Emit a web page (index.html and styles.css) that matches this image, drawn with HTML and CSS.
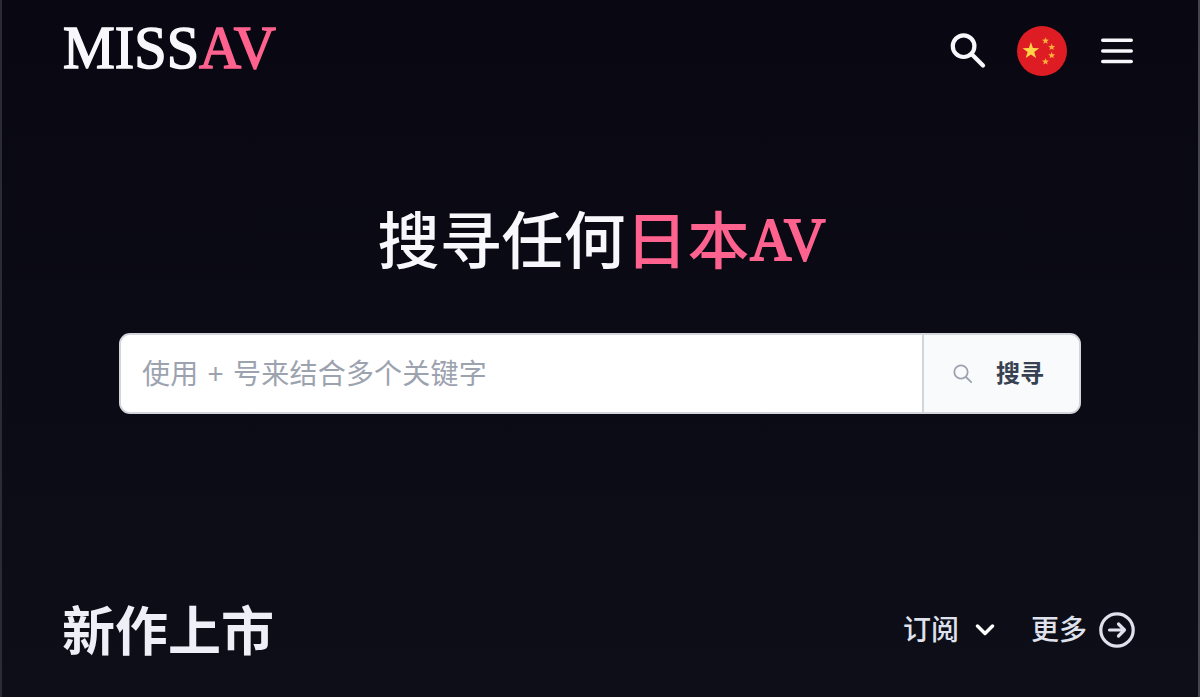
FILE: index.html
```
<!DOCTYPE html>
<html lang="zh-CN">
<head>
    <meta charset="UTF-8">
    <meta name="viewport" content="width=device-width, initial-scale=1.0">
    <title>MISSAV</title>
    <link rel="stylesheet" href="styles.css">
</head>
<body>
    <header class="header">
        <a class="logo"><span class="logo-text">MISS<span class="pink">AV</span></span></a>
        <nav class="nav">
            <svg class="icon-search" viewBox="0 0 36 36" fill="none" stroke="currentColor" stroke-width="4.2" stroke-linecap="round">
                <circle cx="13.6" cy="13.2" r="10.8"/>
                <path d="M22 21.5 33 32.5"/>
            </svg>
            <svg class="flag" viewBox="0 0 50 50">
                <circle cx="25" cy="25" r="25" fill="#de1c24"/>
                <g fill="#ffd447">
                    <path d="M13.9 16.1 15.9 22.1 22.2 22.2 17.2 26 19.1 32.1 13.9 28.5 8.7 32.1 10.6 26 5.5 22.2 11.9 22.1Z"/>
                    <g fill="#fbb03c">
                        <path id="star" d="M28.5 11.2 29.4 13.6 31.9 13.7 30 15.3 30.6 17.7 28.5 16.4 26.3 17.7 27 15.3 25 13.7 27.6 13.6Z"/>
                        <use href="#star" x="6.2" y="6.4"/>
                        <use href="#star" x="6.2" y="14.6"/>
                        <use href="#star" y="20.9"/>
                    </g>
                </g>
            </svg>
            <svg class="icon-menu" viewBox="0 0 32 26" fill="none" stroke="currentColor" stroke-width="3.6" stroke-linecap="round">
                <path d="M1.8 2.3H30.2M1.8 13H30.2M1.8 23.5H30.2"/>
            </svg>
        </nav>
    </header>

    <main>
        <section class="hero">
            <h1 class="title">搜寻任何<span class="pink">日本<span class="latin">AV</span></span></h1>
            <form class="search">
                <input class="search-input" type="text" placeholder="使用 + 号来结合多个关键字">
                <button class="search-button" type="button">
                    <svg class="icon-small" viewBox="0 0 20 20" fill="none" stroke="currentColor" stroke-width="1.8" stroke-linecap="round">
                        <circle cx="8" cy="8" r="6.7"/>
                        <path d="M13 13 18.2 18.2"/>
                    </svg>
                    <span class="search-label">搜寻</span>
                </button>
            </form>
        </section>

        <section class="section-head">
            <h2 class="section-title">新作上市</h2>
            <div class="links">
                <a class="link subscribe"><span class="link-text">订阅</span>
                    <svg class="icon-chevron" viewBox="0 0 20 12" fill="none" stroke="currentColor" stroke-width="3.4" stroke-linecap="round" stroke-linejoin="round">
                        <path d="M2.5 2 10 9.5 17.5 2"/>
                    </svg>
                </a>
                <a class="link more"><span class="link-text">更多</span>
                    <svg class="icon-arrow" viewBox="0 0 36 36" fill="none" stroke="currentColor" stroke-width="3.2" stroke-linecap="round" stroke-linejoin="round">
                        <circle cx="18" cy="18" r="16.2"/>
                        <path d="M10.5 18H25.5M19.5 12 25.5 18 19.5 24"/>
                    </svg>
                </a>
            </div>
        </section>
    </main>
</body>
</html>
```
FILE: styles.css
```
* {
    box-sizing: border-box;
}
body {
    margin: 0;
    height: 697px;
    overflow: hidden;
    border-left: 2px solid #2b2b35;
    border-right: 2px solid #45464d;
    background: linear-gradient(#090812, #0e0e18);
    color: #f8f8fc;
    font-family: "Noto Sans CJK SC", sans-serif;
}
.pink {
    color: #fe628e;
}
.header {
    display: flex;
    justify-content: space-between;
    align-items: center;
    height: 100px;
    padding: 0 65px 0 61px;
}
.logo {
    width: 214px;
    height: 100px;
}
.logo-text {
    display: inline-block;
    font-family: "Liberation Serif", serif;
    font-size: 62px;
    line-height: 94px;
    transform: scaleX(0.94);
    transform-origin: left;
    -webkit-text-stroke: 1.6px currentColor;
}
.nav {
    display: flex;
    align-items: center;
    padding-top: 1px;
}
.icon-search {
    width: 36px;
    height: 36px;
}
.flag {
    width: 50px;
    height: 50px;
    margin: 0 34px 0 31px;
}
.icon-menu {
    width: 32px;
    height: 26px;
}
.hero {
    height: 474px;
    padding: 91px 117px 0;
}
.title {
    margin: 0;
    height: 92px;
    padding-left: 3px;
    font-size: 62px;
    font-weight: 500;
    line-height: 92px;
    text-align: center;
    white-space: nowrap;
}
.latin {
    display: inline-block;
    width: 76px;
    font-family: "Liberation Serif", serif;
    font-size: 61px;
    line-height: 1;
    vertical-align: 4px;
    text-align: left;
    transform: scaleX(0.94);
    transform-origin: left;
    -webkit-text-stroke: 2px currentColor;
}
.search {
    display: flex;
    height: 81px;
    margin: 50px 0 0;
    border: 2px solid #d2d5dc;
    border-radius: 11px;
    background: #fff;
    overflow: hidden;
}
.search-input {
    flex: 1;
    min-width: 0;
    padding: 0 0 4px 21px;
    border: none;
    outline: none;
    background: #fff;
    font-family: inherit;
    font-size: 28px;
    letter-spacing: 0.2px;
    word-spacing: 3px;
}
.search-input::placeholder {
    color: #9ca3af;
    opacity: 1;
}
.search-button {
    display: flex;
    align-items: center;
    width: 157px;
    padding: 0 0 0 29px;
    gap: 23px;
    border: none;
    border-left: 2px solid #d2d5dc;
    background: #f9fafb;
    color: #374151;
    font-family: inherit;
    font-size: 24px;
    font-weight: 700;
}
.search-label {
    padding-bottom: 4px;
}
.icon-small {
    width: 20px;
    height: 20px;
    color: #9ca3af;
}
.section-head {
    display: flex;
    justify-content: space-between;
    align-items: center;
    height: 112px;
    padding: 0 63px 0 60px;
}
.section-title {
    margin: 0;
    padding-bottom: 4px;
    color: #eeeff7;
    font-size: 53px;
    font-weight: 700;
    line-height: 80px;
}
.links {
    display: flex;
    align-items: center;
    gap: 36px;
}
.link {
    display: flex;
    align-items: center;
    color: #dfe2ed;
    font-size: 28px;
    font-weight: 500;
    line-height: 40px;
}
.link-text {
    padding-bottom: 4px;
}
.subscribe {
    gap: 16px;
}
.more {
    gap: 12px;
}
.icon-chevron {
    width: 20px;
    height: 12px;
    color: #fff;
}
.icon-arrow {
    width: 36px;
    height: 36px;
}
```
